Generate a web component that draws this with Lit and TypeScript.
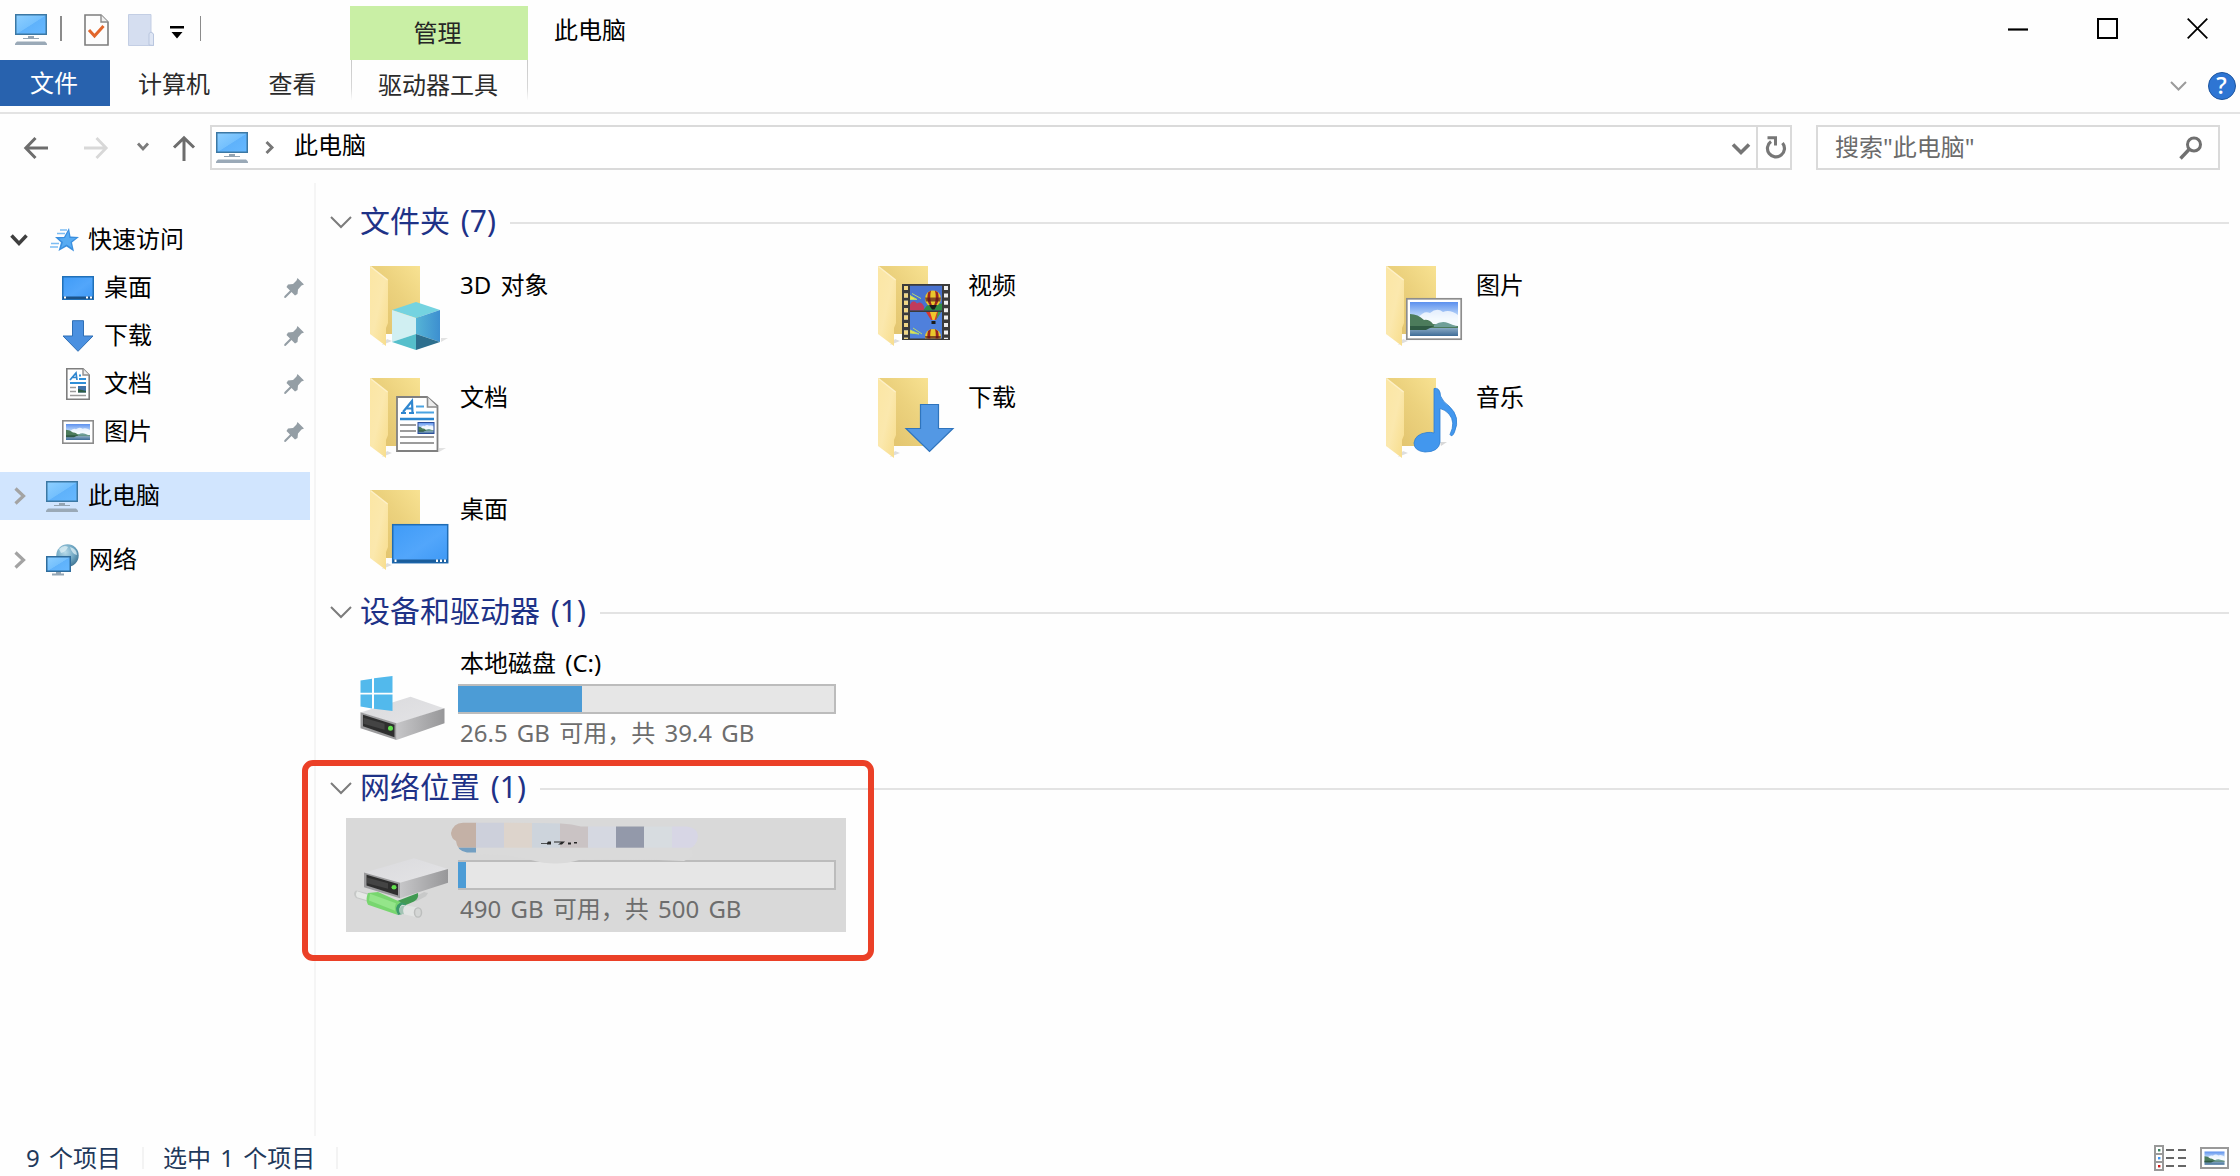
import { LitElement, html, svg, css, nothing, type SVGTemplateResult, type TemplateResult } from "lit";
import { customElement, property } from "lit/decorators.js";

const gradients = svg`
  <defs>
    <linearGradient id="screen" x1="0" y1="0" x2="1" y2="1">
      <stop offset="0" stop-color="#8fd0ff"/><stop offset=".5" stop-color="#74c0fd"/><stop offset=".52" stop-color="#5fb2fb"/><stop offset="1" stop-color="#66b8ff"/>
    </linearGradient>
    <linearGradient id="desk" x1="0" y1="0" x2="1" y2="1">
      <stop offset="0" stop-color="#3f9bf7"/><stop offset=".55" stop-color="#52a6fb"/><stop offset="1" stop-color="#3d98f5"/>
    </linearGradient>
    <linearGradient id="back" x1="0" y1="1" x2="1" y2="0">
      <stop offset="0" stop-color="#dfc06a"/><stop offset=".6" stop-color="#ecd27e"/><stop offset="1" stop-color="#f8e292"/>
    </linearGradient>
    <linearGradient id="flap" x1="0" y1="0" x2="1" y2="1">
      <stop offset="0" stop-color="#fbe6a4"/><stop offset=".5" stop-color="#fbe8ad"/><stop offset="1" stop-color="#f7dc8a"/>
    </linearGradient>
    <linearGradient id="sky" x1="0" y1="0" x2="0" y2="1">
      <stop offset="0" stop-color="#5c90ee"/><stop offset=".5" stop-color="#d3e8fb"/><stop offset="1" stop-color="#eef6fd"/>
    </linearGradient>
    <linearGradient id="lake" x1="0" y1="0" x2="0" y2="1">
      <stop offset="0" stop-color="#89a9c4"/><stop offset="1" stop-color="#3f6c97"/>
    </linearGradient>
    <linearGradient id="side" x1="0" y1="0" x2="1" y2="0">
      <stop offset="0" stop-color="#c6c6c8"/><stop offset="1" stop-color="#979799"/>
    </linearGradient>
    <linearGradient id="top" x1="0" y1="0" x2="1" y2="1">
      <stop offset="0" stop-color="#dadadd"/><stop offset="1" stop-color="#e4e4e6"/>
    </linearGradient>
    <linearGradient id="cubeR" x1="0" y1="0" x2="1" y2="0">
      <stop offset="0" stop-color="#55b4d6"/><stop offset="1" stop-color="#3d8fd0"/>
    </linearGradient>
    <radialGradient id="globe" cx=".4" cy=".35" r=".7">
      <stop offset="0" stop-color="#b9dcea"/><stop offset=".6" stop-color="#6ea6c2"/><stop offset="1" stop-color="#3f7391"/>
    </radialGradient>
  </defs>`;

const folder = svg`
  <path d="M12 79L22 75L17 73Z" fill="#dedede"/>
  <path d="M0 0H50V68H16V58H10Z" fill="url(#back)"/>
  <path d="M0 0L18 14V57L16 62V80L0 68Z" fill="url(#flap)"/>
  <path d="M0.5 0.5L17.6 14" stroke="#fdf0c8" stroke-width="1.4"/>`;

const photo = svg`
  <rect width="48" height="34" fill="url(#sky)"/>
  <path d="M8 16Q14 8 20 11Q27 5 33 10Q40 7 48 13V24H8Z" fill="#fff" opacity=".75"/>
  <path d="M0 12Q8 12 14 18Q19 17 23 22L48 24V27H0Z" fill="#4c7b5b"/>
  <path d="M24 23Q32 18 38 21L48 25H24Z" fill="#6f9f98"/>
  <rect y="26" width="48" height="8" fill="url(#lake)"/>
  <path d="M0 24H24L16 28H0Z" fill="#2f5a43"/>`;

const drive = svg`
  <path d="M0 15.700L50 0L84 11.700L36 27Z" fill="url(#top)"/>
  <path d="M36 26.500L84 11.500V26.500L36 43.300Z" fill="url(#side)"/>
  <path d="M0 15.500L36 26.500V43.300L0 31.500Z" fill="#9b9b9d"/>
  <path d="M2.500 18L34 28V40.500L2.500 29.500Z" fill="#2e2e2e"/>
  <path d="M3 21L24 27V33L3 27Z" fill="#444"/>
  <circle cx="30" cy="31.500" r="2.500" fill="#62e04e"/>`;

const balloon = svg`
  <circle r="8" fill="#e8c72c"/>
  <path d="M-5 -6Q-7 2 -3 7H-1Q-4 0 -2 -8ZM5 -6Q7 2 3 7H1Q4 0 2 -8Z" fill="#9c2420"/>
  <path d="M-8 -1H8L7 3H-7Z" fill="#5a1a1a" opacity=".7"/>
  <path d="M-4 6.500L-1 11H1.500L4 6.500Z" fill="#1b1b1b"/>`;

type Art = { w: number; h: number; body: SVGTemplateResult };

const art: Record<string, Art> = {
  pc: { w: 32, h: 31, body: svg`
    <rect x=".75" y=".75" width="30.500" height="19.500" fill="url(#screen)" stroke="#3c78a4" stroke-width="1.500"/>
    <path d="M13 22H19V24H24V25H8V24H13Z" fill="#94a4b2"/>
    <path d="M2 27.500H30L32 29.500V31H0V29.500Z" fill="#9aa9b7"/>` },
  docCheck: { w: 25, h: 32, body: svg`
    <path d="M1 1H17L24 8V31H1Z" fill="#fdfdfd" stroke="#7d7d7d" stroke-width="1.600"/>
    <path d="M17 1V8H24" fill="#f0f0f0" stroke="#8b8b8b" stroke-width="1.400"/>
    <path d="M5 16L10.500 22L19.500 12" fill="none" stroke="#e2662b" stroke-width="3"/>` },
  blank: { w: 26, h: 32, body: svg`
    <path d="M.5 .5H23V18L25.500 20V31.500H.5Z" fill="#d5def0" stroke="#c3cee4"/>
    <path d="M21 31V19.500L23 18L25.500 20V31.500Z" fill="#dfe6f4" stroke="#b9c6df"/>` },
  customize: { w: 14, h: 13, body: svg`<path d="M0 0H14V2.400H0ZM1.500 6H12.500L7 12.500Z" fill="#000"/>` },
  minimize: { w: 20, h: 20, body: svg`<path d="M0 10.500H20" stroke="#000" stroke-width="2.200"/>` },
  maximize: { w: 21, h: 21, body: svg`<rect x="1" y="1" width="19" height="19" fill="none" stroke="#000" stroke-width="2"/>` },
  close: { w: 21, h: 21, body: svg`<path d="M.7 .7L20.300 20.300M20.300 .7L.7 20.300" stroke="#000" stroke-width="1.800"/>` },
  thinDown: { w: 22, h: 12, body: svg`<path d="M1 1L11 11L21 1" fill="none" stroke="#7c7c7c" stroke-width="2"/>` },
  ribbonDown: { w: 17, h: 10, body: svg`<path d="M1 1L8.500 8.500L16 1" fill="none" stroke="#9b9b9b" stroke-width="2"/>` },
  left: { w: 24, h: 22, body: svg`<path d="M24 11H2M11.500 1L1.800 11L11.500 21" fill="none" stroke="#6d6d6d" stroke-width="3"/>` },
  right: { w: 24, h: 22, body: svg`<path d="M0 11H22M12.500 1L22.200 11L12.500 21" fill="none" stroke="#d8d8d8" stroke-width="2.800"/>` },
  up: { w: 22, h: 25, body: svg`<path d="M11 25V2M1 11.500L11 1.800L21 11.500" fill="none" stroke="#6d6d6d" stroke-width="3"/>` },
  smallDown: { w: 12, h: 9, body: svg`<path d="M1 1.500L6 7L11 1.500" fill="none" stroke="#7b7b7b" stroke-width="2.800"/>` },
  crumb: { w: 9, h: 13, body: svg`<path d="M1.500 1L7 6.500L1.500 12" fill="none" stroke="#777" stroke-width="2.900"/>` },
  boxDown: { w: 18, h: 12, body: svg`<path d="M1 1.500L9 9.500L17 1.500" fill="none" stroke="#757575" stroke-width="3.600"/>` },
  refresh: { w: 21, h: 22, body: svg`
    <path d="M17.500 7A8.500 8.500 0 1 1 6 5.500" fill="none" stroke="#777" stroke-width="3.200"/>
    <path d="M2.500 1.700H10.500V9.500" fill="none" stroke="#777" stroke-width="3"/>` },
  search: { w: 24, h: 24, body: svg`
    <circle cx="15" cy="8.500" r="6.500" fill="none" stroke="#707070" stroke-width="3"/>
    <path d="M10.500 13L1.500 22.500" stroke="#707070" stroke-width="3.400"/>` },
  treeOpen: { w: 18, h: 12, body: svg`<path d="M1.500 1.500L9 9.500L16.500 1.500" fill="none" stroke="#3f3f3f" stroke-width="3.500"/>` },
  treeShut: { w: 12, h: 18, body: svg`<path d="M1.500 1.500L9.500 9L1.500 16.500" fill="none" stroke="#a3a3a3" stroke-width="3.200"/>` },
  star: { w: 29, h: 24, body: svg`
    <path d="M19 0L20.500 8.500L29 9L22 14.500L24 23.500L16.500 18.500L8.500 23L11 14.500L5 9H14Z" fill="#3a8fdf"/>
    <path d="M18.500 3L19.500 10L26 10L20.500 14L22 20L16.500 16.500L11 20L13 14L8.500 10.500L15 10Z" fill="#57abf2"/>
    <path d="M10 2H17M7 5.500H15M1 15.500H9M0 19H8" stroke="#7dbdf3" stroke-width="1.500"/>` },
  desktop: { w: 32, h: 24, body: svg`
    <rect x=".75" y=".75" width="30.500" height="22.500" fill="url(#desk)" stroke="#2070b8" stroke-width="1.500"/>
    <rect x="1" y="20.500" width="30" height="2.500" fill="#1c5388"/>
    <path d="M2 20.500H4V22.500H2ZM24 20.500H26V22.500H24ZM28 20.500H30V22.500H28Z" fill="#fff"/>` },
  download: { w: 32, h: 32, body: svg`<path d="M10.500 .7H21.500V16H31L16 31.300L1 16H10.500Z" fill="#4a90e0" stroke="#2f6fb5"/>` },
  document: { w: 24, h: 32, body: svg`
    <path d="M.8 .8H17L23.200 7V31.200H.8Z" fill="#fff" stroke="#7e7e7e" stroke-width="1.600"/>
    <path d="M17 .8V7H23.200" fill="#ececec" stroke="#8f8f8f" stroke-width="1.400"/>
    <path d="M4 12L10 5L11 12M6 9.500H11" fill="none" stroke="#2f86cf" stroke-width="1.700"/>
    <path d="M13 7.500H15M13 11H20M4 15H20" stroke="#2f8fd8" stroke-width="2"/>
    <path d="M4 19.500H10M4 23.500H10M4 27.500H20" stroke="#9a9a9a" stroke-width="1.500"/>
    <rect x="12" y="18" width="8" height="6.500" fill="#3f72a8"/><path d="M12 21L20 23V24.500H12Z" fill="#2e5c43"/>` },
  picture: { w: 32, h: 24, body: svg`
    <rect x=".8" y=".8" width="30.400" height="22.400" fill="#fff" stroke="#8c8c8c" stroke-width="1.600"/>
    <g transform="translate(4 4) scale(.5 .47)">${photo}</g>` },
  network: { w: 33, h: 32, body: svg`
    <circle cx="21.500" cy="11.500" r="11.200" fill="url(#globe)"/>
    <path d="M13 5Q18 0 22 3Q20 8 15 9ZM24 3Q31 5 31 11Q26 10 24 3Z" fill="#dff0f5" opacity=".75"/>
    <rect x=".75" y="12.750" width="23.500" height="14.500" fill="url(#screen)" stroke="#2f6d9d" stroke-width="1.500"/>
    <path d="M10 28H15V29.500H18V31.500H6V29.500H10Z" fill="#93a5b4"/>` },
  pin: { w: 20, h: 20, body: svg`
    <path d="M13.500 0L20 6.500L17.500 7.500L14 11.500L13.500 16L11 17.500L7.500 14L1.500 20L0 19.500L.5 18L6 12.500L2.500 9L4 6.500L9 6L12.500 2.500Z" fill="#949ea5"/>` },
  f3d: { w: 80, h: 86, body: svg`${folder}
    <path d="M71 76L78 72L71 72Z" fill="#e2e2e2"/>
    <path d="M22 44L46 36L70 44L46 52Z" fill="#74d3e0"/>
    <path d="M22 44L46 52V68L22 76Z" fill="#d0eff2"/>
    <path d="M46 52L70 44V76L46 68Z" fill="url(#cubeR)"/>
    <path d="M22 76L46 68V84Z" fill="#56bfcb"/>
    <path d="M46 68L70 76L46 84Z" fill="#2d6f8e"/>` },
  fvideo: { w: 80, h: 86, body: svg`${folder}
    <rect x="24" y="18" width="48" height="56" fill="#3b3b3b"/>
    <path d="M28 20V73M68 20V73" stroke="#eee" stroke-width="4" stroke-dasharray="4 3.400"/>
    <path d="M28 20V73" stroke="#f0d684" stroke-width="4" stroke-dasharray="4 3.400"/>
    <svg x="32" y="19.500" width="32" height="25" viewBox="0 0 32 25">
      <rect width="32" height="25" fill="#4872cf"/>
      <path d="M0 10L7 14L0 14ZM2 8L11 13" fill="#f4e04a" stroke="#b6d96c"/>
      <path d="M0 19Q3 13 7 18Q11 15 14 21V25H0Z" fill="#c23a5c"/><path d="M13 25L17 20L32 18V25Z" fill="#2f8d45"/>
      <g transform="translate(23 13)">${balloon}</g>
    </svg>
    <svg x="32" y="46" width="32" height="26.500" viewBox="0 0 32 26.500">
      <rect width="32" height="27" fill="#4f80dc"/>
      <path d="M16 0H31L26 8H21Z" fill="#d8362d"/><path d="M20 0H27L24.500 8H22.500Z" fill="#f0c52b"/><path d="M28 0H31L26 8Z" fill="#3aa24a"/>
      <path d="M21.500 9H25.500V12H21.500Z" fill="#1b1b1b"/>
      <path d="M0 18L9 22L0 21ZM3 16L12 22" fill="#f4e04a" stroke="#b6d96c"/>
      <g transform="translate(23 25)">${balloon}</g>
    </svg>` },
  fpicture: { w: 80, h: 86, body: svg`${folder}
    <rect x="20.800" y="32.800" width="54.400" height="40.400" fill="#fff" stroke="#8d8d8d" stroke-width="1.700"/>
    <g transform="translate(24 36)">${photo}</g>` },
  fdocument: { w: 80, h: 86, body: svg`${folder}
    <path d="M69 74L76 70L69 70Z" fill="#e2e2e2"/>
    <path d="M27 19H57L67.500 28V73H27Z" fill="#fff" stroke="#808080" stroke-width="1.800"/>
    <path d="M57.500 19V29H67.500" fill="#ececec" stroke="#8b8b8b" stroke-width="1.600"/>
    <path d="M31 35H36M39 35H44M33 34L42 23L42.500 35M36 30.500H42" fill="none" stroke="#2f86cf" stroke-width="2.200"/>
    <path d="M46 28.500H54M46 34.500H64" stroke="#4aa3e2" stroke-width="2"/>
    <path d="M30 41H64" stroke="#2b86cf" stroke-width="2.400"/>
    <path d="M30 47H46M30 53H46M30 59H64M30 65H64" stroke="#9c9c9c" stroke-width="2"/>
    <g transform="translate(48 44.500) scale(.333 .33)">${photo}</g>
    <rect x="48" y="44.500" width="16" height="11" fill="none" stroke="#2c4f9c" stroke-width="1"/>` },
  fdownload: { w: 80, h: 86, body: svg`${folder}
    <path d="M42.500 26.500H60.500V50.500H75L51.500 73.500L28 50.500H42.500Z" fill="#5398e4" stroke="#2f74bd" stroke-width="1.200"/>` },
  fmusic: { w: 80, h: 86, body: svg`${folder}
    <path d="M55 68L61 64H54Z" fill="#d8d8d8"/>
    <path d="M48 10.500Q54 9 54.500 18Q57 24 63 28Q75 39 68.500 54Q66 60 64 56.500Q70 44 63 36Q59 31.500 54 30.500V64Q53 74 39 74Q28 73 28 65Q29 56 41 54.500Q45 54 48 55Z" fill="#4297ee" stroke="#2f7fd2" stroke-width=".8"/>` },
  fdesktop: { w: 80, h: 86, body: svg`${folder}
    <rect x="22.700" y="34.700" width="55" height="38" fill="url(#desk)" stroke="#1f6cb4" stroke-width="1.500"/>
    <rect x="23" y="69.500" width="54.500" height="3" fill="#1a5d9b"/>
    <path d="M24.500 69.500H26.500V72H24.500ZM66 69.500H68V72H66ZM70 69.500H72V72H70ZM74 69.500H76V72H74Z" fill="#fff"/>` },
  localDisk: { w: 98, h: 76, body: svg`
    <g transform="translate(14.500 20.700)">${drive}</g>
    <path transform="translate(2.500 -1.800) scale(1 .9)" d="M12 7L23.500 5V20.500H12ZM25.500 4.600L44 2V20.500H25.500ZM12 22.500H23.500V38L12 36ZM25.500 22.500H44V41L25.500 38.300Z" fill="#52b9ec"/>` },
  netDisk: { w: 98, h: 76, body: svg`
    <g transform="translate(2 1) scale(1 .85)">
      <path d="M8 44Q4 47 8 53L22 58V48Z" fill="#c6c8c7"/><path d="M9 45Q7 49 9 52L20 56V49Z" fill="#e6e8e6"/>
      <path d="M66 52L76 46L80 47L78 51L68 57Z" fill="#c8c9c9"/>
      <path d="M46 58L70 47Q71 54 66 57L52 64Z" fill="#419a52"/>
      <path d="M20 47Q17 55 20 61L50 73Q46 64 53 58L30 46Z" fill="#78d66f"/>
      <path d="M22 48L48 59Q46 64 47 68L21 56Z" fill="#94e58a"/>
      <path d="M50 73Q45 63 53 58L58 60V71Z" fill="#3b9a6a"/>
      <path d="M54 61L70 64Q74 70 70 76L52 71Q50 64 54 61Z" fill="#e2e4e3"/>
      <path d="M54 62L57 62Q54 66 56 72L52 71Q50 65 54 62Z" fill="#a3c4b5"/>
      <ellipse cx="70" cy="70" rx="3.500" ry="5.500" fill="#d4d6d5" stroke="#bcbebd" stroke-width="1.500"/>
    </g>
    <g transform="translate(18 6.300) scale(1 .92)">${drive}</g>` },
  details: { w: 33, h: 26, body: svg`
    <rect x="1" y="1" width="8" height="24" fill="#fff" stroke="#999" stroke-width="2"/>
    <path d="M0 9H10M0 17H10" stroke="#999" stroke-width="2"/>
    <rect x="4" y="4" width="2.400" height="2.400" fill="#3b7f5f"/><rect x="4" y="12" width="2.400" height="2.400" fill="#3f93f0"/><rect x="4" y="20" width="2.400" height="2.400" fill="#d01818"/>
    <path d="M12 5H20M24 5H32M12 13H20M24 13H32M12 21H20M24 21H32" stroke="#666" stroke-width="2"/>` },
  tiles: { w: 29, h: 22, body: svg`
    <rect x="1" y="1" width="27" height="20" fill="#fff" stroke="#999" stroke-width="2"/>
    <g transform="translate(4.500 4.500) scale(.417 .39)">${photo}</g>` },
};

@customElement("win-icon")
class WinIcon extends LitElement {
  @property() name = "pc";
  static styles = css`
    :host { display: block; flex: none; }
    .art { display: block; overflow: visible; }
  `;
  render() {
    const a = art[this.name];
    return html`<svg class="art" width=${a.w} height=${a.h} viewBox="0 0 ${a.w} ${a.h}">${gradients}${a.body}</svg>`;
  }
}

const sidebarItems = [
  { label: "桌面", icon: "desktop" },
  { label: "下载", icon: "download" },
  { label: "文档", icon: "document" },
  { label: "图片", icon: "picture" },
];

const folders = [
  { label: "3D 对象", icon: "f3d" },
  { label: "视频", icon: "fvideo" },
  { label: "图片", icon: "fpicture" },
  { label: "文档", icon: "fdocument" },
  { label: "下载", icon: "fdownload" },
  { label: "音乐", icon: "fmusic" },
  { label: "桌面", icon: "fdesktop" },
];

@customElement("app-root")
class AppRoot extends LitElement {
  static styles = css`
    :host {
      display: block; width: 2240px; height: 1176px; overflow: hidden; background: #fefefe; color: #000;
      font: 24px/32px "Noto Sans", "Noto Sans CJK SC", sans-serif; word-spacing: 3px;
    }
    * { box-sizing: border-box; }
    .window { display: flex; flex-direction: column; height: 100%; white-space: nowrap; }
    .title { display: flex; height: 60px; }
    .quick { display: flex; width: 350px; padding: 14px 0 0 15px; align-items: flex-start; }
    .vline { width: 1.500px; height: 25px; margin-top: 2px; background: #8b8b8b; }
    .q1 { margin-left: 13px; } .q2 { margin-left: 22px; } .q3 { margin-left: 19px; }
    .q4 { margin: 12px 0 0 16px; } .q5 { margin-left: 16px; }
    .manage { width: 178px; height: 54px; margin-top: 6px; padding-right: 3px; background: #c9efa5; color: #262626; display: flex; justify-content: center; align-items: center; }
    .name { margin: 14px 0 0 26px; flex: 1; }
    .controls { display: flex; align-items: center; height: 57px; gap: 69px; padding-right: 32px; }
    .tabs { display: flex; height: 54px; border-bottom: 2px solid #e3e3e3; color: #2b2b2b; }
    .tab { height: 48px; display: flex; align-items: center; justify-content: center; }
    .file { width: 110px; height: 46px; padding-right: 2px; background: #2862ae; color: #fff; }
    .computer { width: 128px; } .view { width: 112px; margin-right: 1px; padding-right: 3px; }
    .drive { width: 177px; height: 40px; padding: 9px 3px 0 0; border: 1.500px solid; border-width: 0 1px; border-image: linear-gradient(#c9c9c9, #d8d8d8 70%, #fff) 1; }
    .grow { flex: 1; }
    .help { width: 28px; height: 28px; border-radius: 50%; margin: 12px 4.500px 0 21px; background: #2e75d3; border: 1.500px solid #1d559f; color: #fff; font: 600 23px/25px "Open Sans", sans-serif; text-align: center; }
    .ribbon { margin-top: 21px; }
    .nav { display: flex; height: 56px; padding-top: 11px; align-items: flex-start; }
    .n1 { margin: 12px 0 0 24px; } .n2 { margin: 12px 0 0 36px; } .n3 { margin: 17px 0 0 29px; } .n4 { margin: 11px 0 0 24px; }
    .address { display: flex; width: 1582px; height: 45px; margin-left: 15px; border: 2px solid #dadada; background: #fff; }
    .a1 { margin: 5px 0 0 4px; } .a2 { margin: 14px 0 0 17px; } .a3 { margin: 2px 0 0 20px; flex: 1; }
    .a4 { margin: 16px 6px 0 0; }
    .reload { border-left: 2px solid #dadada; width: 34px; padding: 9px 0 0 7px; }
    .find { display: flex; justify-content: space-between; width: 404px; height: 45px; margin-left: 24px; padding: 4px 15px 0 17px; border: 2px solid #dadada; background: #fff; color: #6b6b6b; }
    .f1 { margin-top: 5px; }
    .body { display: flex; height: 966px; }
    .side { width: 316px; border-right: 2px solid #f5f5f5; padding-top: 33px; margin-top: 13px; }
    .row { display: flex; align-items: center; height: 48px; width: 310px; }
    .root { padding-left: 14px; }
    .open { padding-left: 10px; }
    .root .text { margin-left: 10px; } .root .ic { margin-left: 20px; }
    .open .ic { margin-left: 22px; }
    .open .text { margin-left: 9px; }
    .row .text { position: relative; top: -1px; }
    .child { padding-left: 62px; padding-right: 6px; }
    .slot { width: 32px; display: flex; justify-content: center; }
    .child .text { margin-left: 10px; flex: 1; }
    .active { background: #d1e5fe; margin: 16px 0; }
    .main { flex: 1; padding-left: 14px; }
    .head { display: flex; align-items: center; height: 44px; color: #1e3287; font-size: 30px; line-height: 44px; padding-right: 11px; }
    .head .label { margin: 0 14px 0 8px; position: relative; top: -1px; }
    .rule { flex: 1; height: 2px; background: #e3e3e3; position: relative; top: 1px; }
    .first { margin-top: 30px; }
    .grid { display: grid; grid-template-columns: repeat(3, 508px); grid-auto-rows: 112px; padding-left: 40px; margin-top: 22px; }
    .cell { display: flex; gap: 10px; }
    .cell .text { margin-top: 3px; }
    .second { margin-top: -12px; }
    .third { margin-top: 10px; }
    .disk { display: flex; width: 500px; height: 114px; margin: 8px 0 0 16px; padding: 0 10px 0 0; position: relative; }
    .disk.picked { background: #d9d9d9; }
    .disk win-icon { margin-top: 34px; }
    .info { margin-left: 14px; flex: 1; }
    .info .text { height: 42px; padding: 5px 0 0 2px; }
    .meter { height: 30px; width: 378px; border: 2px solid #bcbcbc; background: #e6e6e6; }
    .fill { height: 26px; margin-left: -2px; background: #4c9cd6; }
    .free { color: #6d6d6d; padding: 3px 0 0 2px; }
    .mosaic { position: absolute; left: 105px; top: 4px; }
    .callout { position: absolute; left: 302px; top: 760px; width: 572px; height: 201px; border: 6.500px solid #eb4027; border-radius: 11px; }
    .status { display: flex; height: 40px; align-items: center; padding: 3px 11px 0 26px; color: #1e395b; }
    .bar { width: 2px; height: 22px; background: #f3f3f3; }
    .s1 { margin: 0 19px 0 21px; } .s2 { margin-left: 21px; }
    .v2 { margin-left: 13px; }
  `;

  private head(cls: string, label: string): TemplateResult {
    return html`<div class="head ${cls}"><win-icon name="thinDown"></win-icon><span class="label">${label}</span><span class="rule"></span></div>`;
  }

  private disk(icon: string, name: string, used: number, free: string, picked: boolean): TemplateResult {
    return html`<div class="disk ${picked ? "picked" : ""}">
      <win-icon name=${icon}></win-icon>
      <div class="info">
        <div class="text">${name}</div>
        <div class="meter"><div class="fill" style="width:${used}px"></div></div>
        <div class="free">${free}</div>
      </div>
      ${picked ? this.mosaic() : nothing}
    </div>`;
  }

  private mosaic(): TemplateResult {
    const colors = ["#c4b1a6", "#cdd0db", "#ddd4cc", "#cdd4dc", "#cac3c4", "#d5d8e1", "#9399aa", "#d7dce0", "#d7d6e5"];
    return html`<svg class="mosaic" width="250" height="48" viewBox="0 0 250 48">
      <defs><clipPath id="blot"><path d="M12 .7Q65 .7 110 1.500Q121 2 130 4.500H236Q247 6 247 14Q246 24 238 27Q248 32 233 39Q180 36 128 38Q105 45 80 38Q50 31 26 33V30.500H16Q6 29 5 19Q0 16 0 11Q2 1 12 .7Z"/></clipPath></defs>
      <g clip-path="url(#blot)">
        <rect width="250" height="48" fill="#dadada"/>
        ${colors.map((c, i) => svg`<rect x=${i * 28 - 3} y="0" width="28.200" height="25.700" fill=${c}/>`)}
        <rect x="0" y="25.700" width="25" height="5.500" fill="#739fc2"/>
      </g>
      <path d="M90 21H96L97 19.500H100V22.500H96V21.800H90ZM103 19.500H114L111 22.500H107L110 20.500H103ZM117 20.500H120V22.500H117ZM123 20H126V21.500H123Z" fill="#262626"/>
    </svg>`;
  }

  render() {
    return html`<div class="window">
      <div class="title">
        <div class="quick">
          <win-icon name="pc"></win-icon><span class="vline q1"></span>
          <win-icon class="q2" name="docCheck"></win-icon><win-icon class="q3" name="blank"></win-icon>
          <win-icon class="q4" name="customize"></win-icon><span class="vline q5"></span>
        </div>
        <div class="manage">管理</div>
        <div class="name">此电脑</div>
        <div class="controls"><win-icon name="minimize"></win-icon><win-icon name="maximize"></win-icon><win-icon name="close"></win-icon></div>
      </div>
      <div class="tabs">
        <div class="tab file">文件</div><div class="tab computer">计算机</div><div class="tab view">查看</div><div class="tab drive">驱动器工具</div>
        <div class="grow"></div>
        <win-icon class="ribbon" name="ribbonDown"></win-icon><div class="help">?</div>
      </div>
      <div class="nav">
        <win-icon class="n1" name="left"></win-icon><win-icon class="n2" name="right"></win-icon>
        <win-icon class="n3" name="smallDown"></win-icon><win-icon class="n4" name="up"></win-icon>
        <div class="address">
          <win-icon class="a1" name="pc"></win-icon><win-icon class="a2" name="crumb"></win-icon>
          <span class="a3">此电脑</span><win-icon class="a4" name="boxDown"></win-icon>
          <div class="reload"><win-icon name="refresh"></win-icon></div>
        </div>
        <div class="find"><span>搜索"此电脑"</span><win-icon class="f1" name="search"></win-icon></div>
      </div>
      <div class="body">
        <div class="side">
          <div class="row open"><win-icon name="treeOpen"></win-icon><win-icon class="ic" name="star"></win-icon><span class="text">快速访问</span></div>
          ${sidebarItems.map((s) => html`<div class="row child"><span class="slot"><win-icon name=${s.icon}></win-icon></span><span class="text">${s.label}</span><win-icon name="pin"></win-icon></div>`)}
          <div class="row root active"><win-icon name="treeShut"></win-icon><win-icon class="ic" name="pc"></win-icon><span class="text">此电脑</span></div>
          <div class="row root"><win-icon name="treeShut"></win-icon><win-icon class="ic" name="network"></win-icon><span class="text">网络</span></div>
        </div>
        <div class="main">
          ${this.head("first", "文件夹 (7)")}
          <div class="grid">${folders.map((f) => html`<div class="cell"><win-icon name=${f.icon}></win-icon><span class="text">${f.label}</span></div>`)}</div>
          ${this.head("second", "设备和驱动器 (1)")}
          ${this.disk("localDisk", "本地磁盘 (C:)", 124, "26.5 GB 可用，共 39.4 GB", false)}
          ${this.head("third", "网络位置 (1)")}
          ${this.disk("netDisk", "", 8, "490 GB 可用，共 500 GB", true)}
        </div>
      </div>
      <div class="status">
        <span>9 个项目</span><span class="bar s1"></span><span>选中 1 个项目</span><span class="bar s2"></span>
        <div class="grow"></div><win-icon name="details"></win-icon><win-icon class="v2" name="tiles"></win-icon>
      </div>
      <div class="callout"></div>
    </div>`;
  }
}
